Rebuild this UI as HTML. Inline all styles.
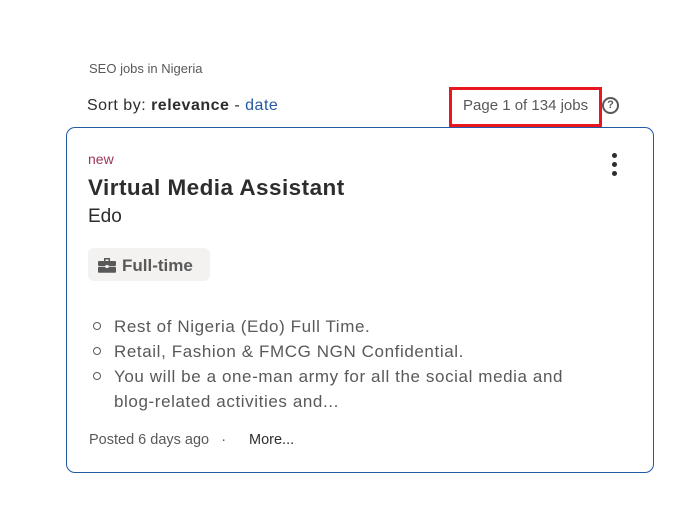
<!DOCTYPE html>
<html><head><meta charset="utf-8"><style>
*{margin:0;padding:0;box-sizing:border-box}
body{width:693px;height:507px;background:#fff;font-family:"Liberation Sans",sans-serif;position:relative;overflow:hidden;color:#2d2d2d}
.a{position:absolute;white-space:nowrap}
</style></head><body>
<div class="a" style="left:89px;top:61px;font-size:13px;color:#595959">SEO jobs in Nigeria</div>
<div class="a" style="left:87px;top:97px;font-size:16px;color:#2d2d2d;letter-spacing:0.5px">Sort by: <b>relevance</b> - <span style="color:#2557a7">date</span></div>
<div class="a" style="left:449px;top:87px;width:153px;height:40px;border:3px solid #e8161f"></div>
<div class="a" style="left:463px;top:97px;font-size:15px;color:#595959">Page 1 of 134 jobs</div>
<div class="a" style="left:602px;top:97px;width:17px;height:17px;border:2px solid #595959;border-radius:50%;font-size:11px;font-weight:bold;color:#595959;text-align:center;line-height:13px">?</div>
<div class="a" style="left:66px;top:127px;width:588px;height:346px;border:1px solid #2557a7;border-radius:9px"></div>
<div class="a" style="left:88px;top:151px;font-size:14px;color:#a0355c">new</div>
<div class="a" style="left:612px;top:153px;width:5px;height:5px;border-radius:50%;background:#2d2d2d"></div>
<div class="a" style="left:612px;top:162px;width:5px;height:5px;border-radius:50%;background:#2d2d2d"></div>
<div class="a" style="left:612px;top:171px;width:5px;height:5px;border-radius:50%;background:#2d2d2d"></div>
<div class="a" style="left:88px;top:175px;font-size:22.5px;font-weight:bold;color:#2d2d2d;letter-spacing:0.45px">Virtual Media Assistant</div>
<div class="a" style="left:88px;top:206px;font-size:19px;color:#2d2d2d">Edo</div>
<div class="a" style="left:88px;top:248px;width:122px;height:33px;background:#f3f2f1;border-radius:6px"></div>
<svg class="a" style="left:98px;top:257px" width="18" height="16" viewBox="0 0 18 16"><path d="M6 1h6v3h-1.5V2.5h-3V4H6z" fill="#595959"/><rect x="0" y="4" width="18" height="5" rx="1" fill="#595959"/><rect x="0" y="9.8" width="18" height="6" rx="1" fill="#595959"/><rect x="7.5" y="8" width="3" height="3" fill="#f3f2f1"/></svg>
<div class="a" style="left:122px;top:256px;font-size:17px;font-weight:bold;color:#595959">Full-time</div>
<div style="position:absolute;left:114px;top:314px;font-size:17px;line-height:25px;color:#595959;letter-spacing:0.6px;white-space:nowrap">
<div>Rest of Nigeria (Edo) Full Time.</div>
<div>Retail, Fashion &amp; FMCG NGN Confidential.</div>
<div>You will be a one-man army for all the social media and</div>
<div>blog-related activities and...</div>
</div>
<div class="a" style="left:93px;top:322px;width:8px;height:8px;border:1.5px solid #595959;border-radius:50%"></div>
<div class="a" style="left:93px;top:347px;width:8px;height:8px;border:1.5px solid #595959;border-radius:50%"></div>
<div class="a" style="left:93px;top:372px;width:8px;height:8px;border:1.5px solid #595959;border-radius:50%"></div>
<div class="a" style="left:89px;top:432px;font-size:14.5px;color:#595959">Posted 6 days ago &nbsp;&nbsp;·</div>
<div class="a" style="left:249px;top:432px;font-size:14.5px;color:#2d2d2d">More...</div>
</body></html>
